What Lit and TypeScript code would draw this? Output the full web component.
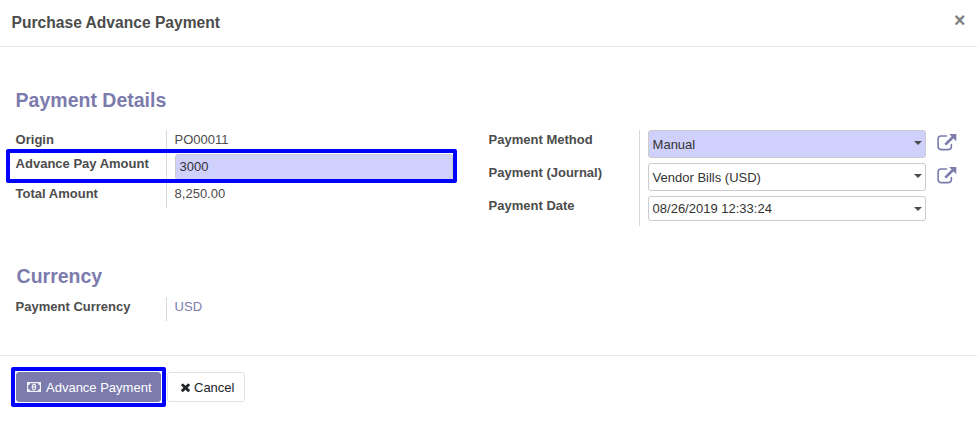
import { LitElement, html, css, svg } from "lit";
import { customElement } from "lit/decorators.js";

const externalLink = html`<svg class="external" viewBox="0 0 20 17">${svg`
  <path d="M9.5 2H4Q1.1 2 1.1 5V12.6Q1.1 15.6 4 15.6H11.4Q14.4 15.6 14.4 12.6V10.5" fill="none" stroke="currentColor" stroke-width="1.6" stroke-linecap="round"/>
  <path d="M8.3 10.6L16 3" fill="none" stroke="currentColor" stroke-width="2.7"/>
  <path d="M12.2 0H19.3V7.2Z" fill="currentColor"/>`}</svg>`;

const money = html`<svg class="money" viewBox="0 0 15 10" preserveAspectRatio="none">${svg`
  <path fill-rule="evenodd" fill="currentColor" d="M0 0H15V10H0ZM3.2 1.2Q3 3 1.2 3.2V6.8Q3 7 3.2 8.8H11.8Q12 7 13.8 6.8V3.2Q12 3 11.8 1.2Z"/>
  <path fill-rule="evenodd" fill="currentColor" d="M7.5 1.7C9.2 1.7 10 3.2 10 5S9.2 8.3 7.5 8.3S5 6.8 5 5S5.8 1.7 7.5 1.7ZM7.2 3L6.2 3.9L6.6 4.3L7.1 4V6.3H6.3V7H8.8V6.3H8V3Z"/>`}</svg>`;

const cross = html`<svg class="cross" viewBox="302 302 1188 1188" preserveAspectRatio="none">${svg`
  <path fill="currentColor" d="M1490 1322q0 40-28 68l-136 136q-28 28-68 28t-68-28l-294-294-294 294q-28 28-68 28t-68-28l-136-136q-28-28-28-68t28-68l294-294-294-294q-28-28-28-68t28-68l136-136q28-28 68-28t68 28l294 294 294-294q28-28 68-28t68 28l136 136q28 28 28 68t-28 68l-294 294 294 294q28 28 28 68z"/>`}</svg>`;

@customElement("app-root")
export class AppRoot extends LitElement {
  static styles = css`
    *, *::after { box-sizing: border-box; }
    :host {
      display: flex; flex-direction: column; height: 424px; overflow: hidden;
      background: #fff; color: #4c4c4c;
      font: 13px/20px "Liberation Sans", Arial, sans-serif;
    }
    header {
      display: flex; justify-content: space-between; align-items: center;
      height: 47px; padding: 0 11px 2px 11.6px; border-bottom: 1px solid #e9e9e9;
    }
    h1 { margin: 0; padding-top: 1px; font-size: 15.6px; line-height: 24px; }
    .close { width: 12px; padding-bottom: 4px; font-size: 19.5px; font-weight: bold; line-height: 20px; color: #7f7f7f; }
    main { flex: 1; padding: 40px 0 0 15.6px; }
    h2 { margin: 0; font-size: 19.5px; line-height: 26px; color: #7c7bad; }
    .details { display: grid; grid-template-columns: 473px 1fr; margin-top: 17px; align-items: start; }
    .group { display: grid; grid-template-columns: 150.4px 1fr; }
    .labels, .values { display: grid; }
    .values { border-left: 1px solid #d9d9d9; padding-left: 7.6px; }
    .left .labels, .left .values { grid-template-rows: 24px 30px 24px; }
    .right .labels, .right .values { grid-template-rows: 33px 33px 30px; }
    .right .values { padding-left: 8px; }
    .labels { font-weight: bold; }
    .highlighted { position: relative; }
    .highlighted::after {
      content: ""; position: absolute; z-index: 1; left: -9.6px; top: -5px;
      width: 451px; height: 34px; border: 4px solid #00f; border-radius: 2px;
    }
    .row { display: flex; align-items: flex-start; }
    .field {
      display: flex; align-items: center; justify-content: space-between;
      width: 278px; height: 28px; padding: 1px 3px 0 3.6px; border: 1px solid #ccc; border-radius: 3px;
      color: #333;
    }
    .required { background: #d0d0fd; }
    .amount { width: 278.6px; height: 26px; padding: 0 4px; }
    .date { height: 25px; padding-top: 0; }
    .caret { border: 4px solid transparent; border-top-color: #4c4c4c; border-bottom: 0; margin-bottom: 3px; }
    .date .caret { margin-bottom: 0; }
    .external { width: 20px; height: 17px; margin: 4px 0 0 11px; color: #7c7bad; }
    .currency { margin: 37px 0 0 1px; }
    .currency-group { margin-top: 8px; height: 24px; }
    .link { color: #7c7bad; }
    footer { display: flex; height: 69px; padding: 16px; border-top: 1px solid #e9e9e9; gap: 6px; }
    .button {
      display: flex; align-items: center; height: 30px; padding-top: 2px; border: 1px solid #dee2e6;
      border-radius: 3px; color: #212529; white-space: nowrap;
    }
    .primary { position: relative; width: 145px; padding-left: 10px; background: #7c7bad; border-color: #7c7bad; color: #fff; }
    .primary::after {
      content: ""; position: absolute; left: -6px; top: -6px; width: 155px; height: 40px;
      border: 4px solid #00f; border-radius: 2px;
    }
    .cancel { width: 78px; padding-left: 12px; }
    .money { width: 14px; height: 10px; margin: 0 5px 2px 0; opacity: 0.9; }
    .cross { width: 9px; height: 8.5px; margin: 0 4px 1.5px 1px; overflow: visible; }
  `;

  render() {
    return html`
      <header><h1>Purchase Advance Payment</h1><span class="close">×</span></header>
      <main>
        <h2>Payment Details</h2>
        <div class="details">
          <div class="group left">
            <div class="labels"><span>Origin</span><span class="highlighted">Advance Pay Amount</span><span>Total Amount</span></div>
            <div class="values">
              <span>PO00011</span><div class="field required amount">3000</div><span>8,250.00</span>
            </div>
          </div>
          <div class="group right">
            <div class="labels"><span>Payment Method</span><span>Payment (Journal)</span><span>Payment Date</span></div>
            <div class="values">
              <div class="row"><div class="field required">Manual<i class="caret"></i></div>${externalLink}</div>
              <div class="row"><div class="field">Vendor Bills (USD)<i class="caret"></i></div>${externalLink}</div>
              <div class="row"><div class="field date">08/26/2019 12:33:24<i class="caret"></i></div></div>
            </div>
          </div>
        </div>
        <h2 class="currency">Currency</h2>
        <div class="group currency-group">
          <div class="labels">Payment Currency</div><div class="values link">USD</div>
        </div>
      </main>
      <footer>
        <div class="button primary">${money}Advance Payment</div>
        <div class="button cancel">${cross}Cancel</div>
      </footer>`;
  }
}
